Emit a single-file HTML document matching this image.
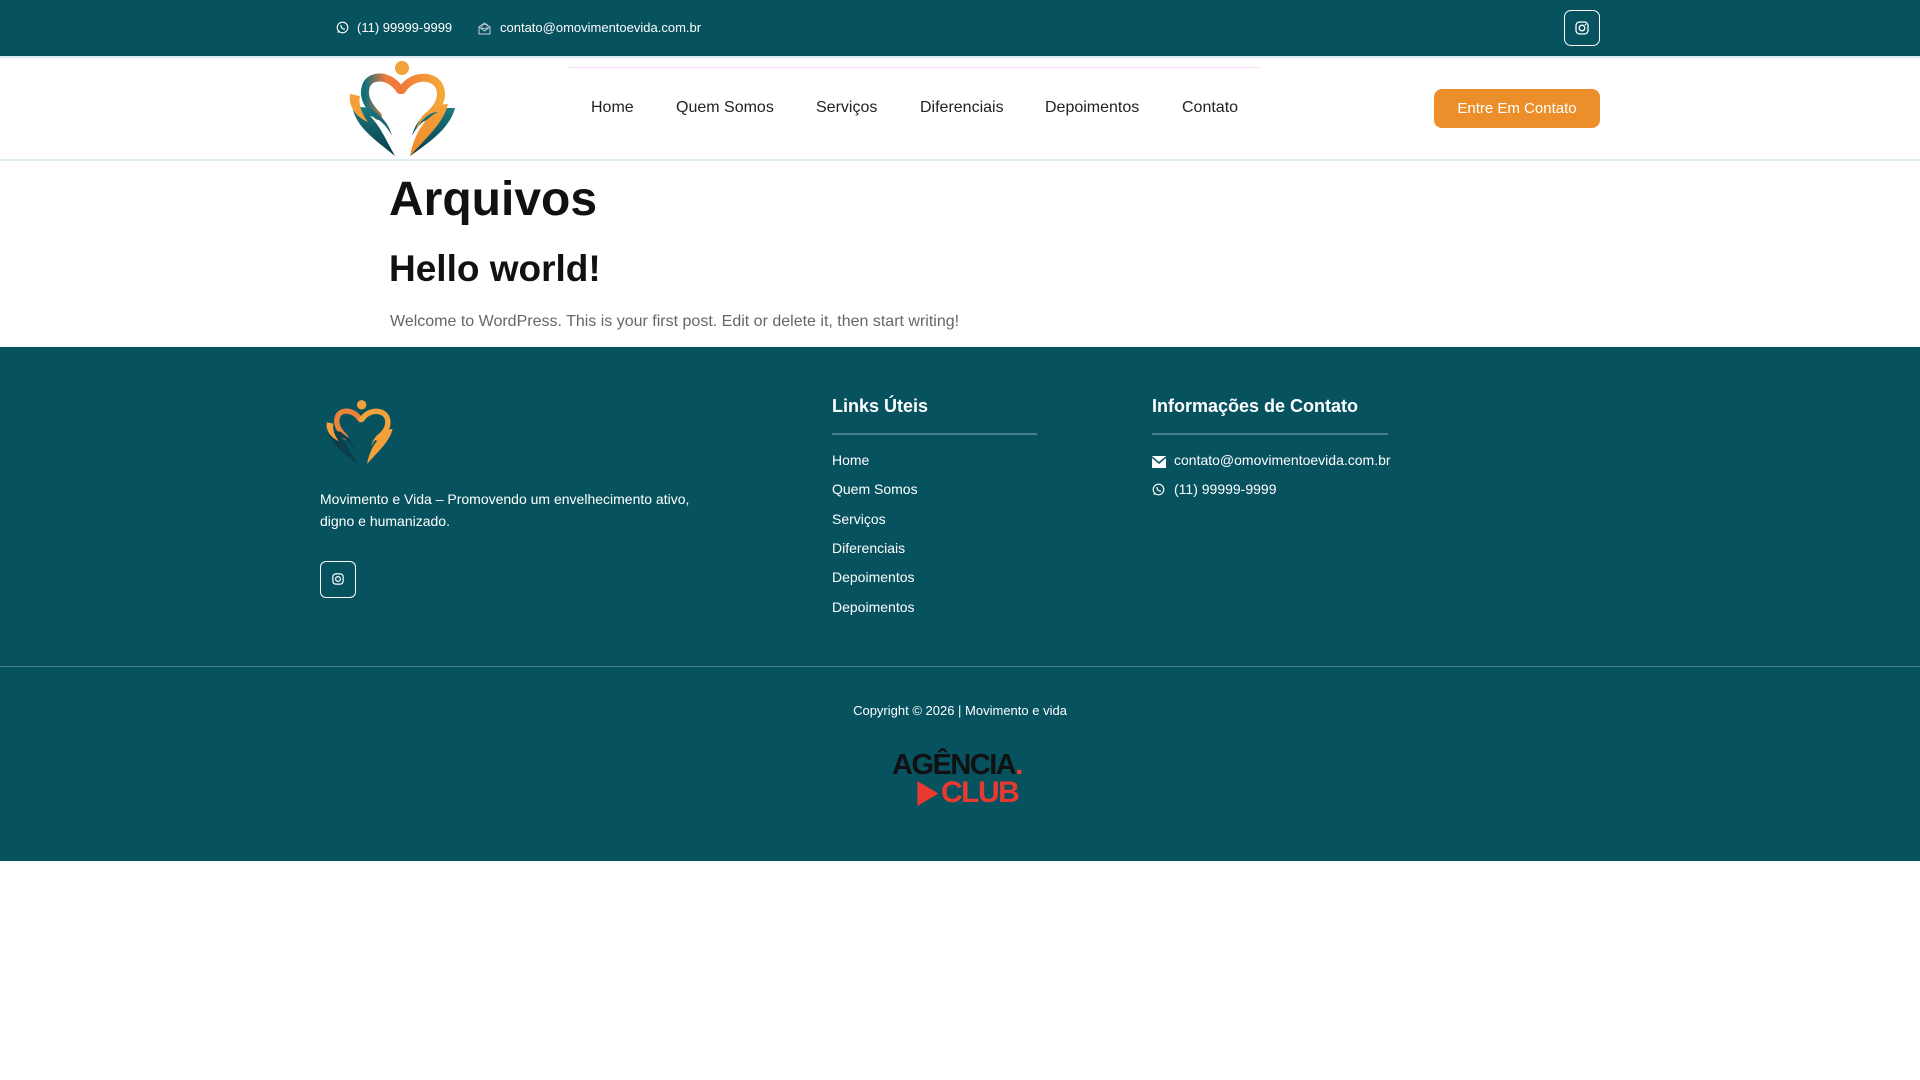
<!DOCTYPE html>
<html><head><meta charset="utf-8"><style>
*{margin:0;padding:0;box-sizing:border-box}
body{width:1920px;height:1080px;background:#fff;font-family:"Liberation Sans",Arial,sans-serif;position:relative;overflow:hidden}
.a{position:absolute;white-space:nowrap}
.top{position:absolute;left:0;top:0;width:1920px;height:56px;background:#07525f}
.hdr{position:absolute;left:0;top:56px;width:1920px;height:105px;border-top:2px solid #dcecf2;border-bottom:2px solid #dcecf2}
.nav{font-size:16px;color:#222;top:99px}
.ft{position:absolute;left:0;top:347px;width:1920px;height:514px;background:#07525f}
.fl{color:#fff;font-size:14px}
</style></head><body>
<div class="top"></div>
<svg class="a" style="left:336px;top:21px" width="13" height="13" viewBox="0 0 16 16"><circle cx="8" cy="8" r="6.5" fill="none" stroke="#fff" stroke-width="1.4"/><path d="M2.5 14.5l1-3" stroke="#fff" stroke-width="1.4"/><path d="M6 5c0 3 2 5 5 5" stroke="#fff" stroke-width="1.6" fill="none"/></svg>
<div class="a" style="left:357px;top:20px;color:#fff;font-size:13px">(11) 99999-9999</div>
<svg class="a" style="left:478px;top:21px" width="13" height="14" viewBox="0 0 13 14"><path d="M1 6l5.5-4 5.5 4v7H1z" fill="none" stroke="#ccd" stroke-width="1"/><path d="M1 6l5.5 4 5.5-4" fill="none" stroke="#ccd"/><rect x="4" y="3.5" width="5" height="4" fill="none" stroke="#ccd" stroke-width=".8"/></svg>
<div class="a" style="left:500px;top:20px;color:#fff;font-size:13px">contato@omovimentoevida.com.br</div>
<div class="a" style="left:1564px;top:10px;width:36px;height:36px;border:1px solid #fff;border-radius:7px"></div>
<svg class="a" style="left:1575px;top:21px" width="14" height="14" viewBox="0 0 14 14"><rect x="1" y="1" width="12" height="12" rx="3.5" fill="none" stroke="#fff" stroke-width="1.3"/><circle cx="7" cy="7" r="2.8" fill="none" stroke="#fff" stroke-width="1.3"/><circle cx="10.5" cy="3.5" r=".8" fill="#fff"/></svg>

<div class="hdr"></div>
<div class="a" style="left:567px;top:67px;width:692px;height:1px;background:#f8d8f8"></div>
<svg class="a" style="left:340px;top:56px" width="125" height="105" viewBox="0 0 125 105">
<defs><linearGradient id="g1" x1="0" x2="1"><stop offset="0" stop-color="#10707a"/><stop offset=".6" stop-color="#f07a3a"/></linearGradient><linearGradient id="g2" x1="0" x2="1"><stop offset="0" stop-color="#f07a3a"/><stop offset="1" stop-color="#f5a838"/></linearGradient><linearGradient id="h1" x1="0" y1="0" x2="0" y2="1"><stop offset="0" stop-color="#1a7b80"/><stop offset="1" stop-color="#083a4a"/></linearGradient><linearGradient id="h2" x1="0" y1="0" x2="0" y2="1"><stop offset="0" stop-color="#f4a13a"/><stop offset="1" stop-color="#f08a2a"/></linearGradient></defs>
<circle cx="62" cy="12" r="7" fill="#f3a23b"/>
<path d="M60 34C50 18 30 18 26 30C22 42 30 52 38 60" fill="none" stroke="url(#g1)" stroke-width="8" stroke-linecap="round"/>
<path d="M62 34C72 18 95 18 100 32C104 44 96 54 86 62" fill="none" stroke="url(#g2)" stroke-width="8" stroke-linecap="round"/>
<path d="M12 50C16 70 30 80 55 100C45 82 40 70 30 60C40 62 48 72 52 80C48 64 36 56 30 52Z" fill="url(#h1)"/>
<path d="M10 38C8 52 18 62 28 66C22 58 18 48 20 40Z" fill="#f4a03a"/>
<path d="M115 52C110 70 96 82 70 100C78 82 84 70 92 62C82 64 76 72 72 80C76 62 90 54 100 52Z" fill="url(#h1)"/>
<path d="M108 48C104 66 88 80 70 100C74 80 82 64 98 56C88 56 80 66 76 74C80 56 96 48 108 48Z" fill="url(#h2)"/>
</svg>
<div class="a nav" style="left:591px">Home</div>
<div class="a nav" style="left:676px">Quem Somos</div>
<div class="a nav" style="left:816px">Serviços</div>
<div class="a nav" style="left:920px">Diferenciais</div>
<div class="a nav" style="left:1045px">Depoimentos</div>
<div class="a nav" style="left:1182px">Contato</div>
<div class="a" style="left:1434px;top:89px;width:166px;height:39px;background:#ec8e2a;border-radius:8px;color:#fff;font-size:15px;line-height:39px;text-align:center">Entre Em Contato</div>

<div class="a" style="left:389px;top:172px;font-size:48px;font-weight:bold;color:#111">Arquivos</div>
<div class="a" style="left:389px;top:248px;font-size:37px;font-weight:bold;color:#111">Hello world!</div>
<div class="a" style="left:390px;top:313px;font-size:16px;color:#666">Welcome to WordPress. This is your first post. Edit or delete it, then start writing!</div>

<div class="ft"></div>
<svg class="a" style="left:320px;top:394px" width="84" height="76" viewBox="0 0 125 105">
<circle cx="62" cy="12" r="7" fill="#f3a23b"/>
<path d="M60 34C50 18 30 18 26 30C22 42 30 52 38 60" fill="none" stroke="#e8843a" stroke-width="8" stroke-linecap="round"/>
<path d="M62 34C72 18 95 18 100 32C104 44 96 54 86 62" fill="none" stroke="#f3a23b" stroke-width="8" stroke-linecap="round"/>
<path d="M12 50C16 70 30 80 55 100C45 82 40 70 30 60C40 62 48 72 52 80C48 64 36 56 30 52Z" fill="#0c3f4c"/>
<path d="M10 38C8 52 18 62 28 66C22 58 18 48 20 40Z" fill="#f4a03a"/>
<path d="M108 48C104 66 88 80 70 100C74 80 82 64 98 56C88 56 80 66 76 74C80 56 96 48 108 48Z" fill="#f4a03a"/>
</svg>
<div class="a fl" style="left:320px;top:488px;line-height:22px;white-space:normal;width:385px">Movimento e Vida – Promovendo um envelhecimento ativo, digno e humanizado.</div>
<div class="a" style="left:320px;top:561px;width:36px;height:37px;border:1px solid #fff;border-radius:6px"></div>
<svg class="a" style="left:332px;top:573px" width="12" height="12" viewBox="0 0 14 14"><rect x="1" y="1" width="12" height="12" rx="3.5" fill="none" stroke="#fff" stroke-width="1.4"/><circle cx="7" cy="7" r="2.8" fill="none" stroke="#fff" stroke-width="1.4"/></svg>

<div class="a" style="left:832px;top:396px;color:#fff;font-size:18px;font-weight:bold">Links Úteis</div>
<div class="a" style="left:832px;top:433px;width:205px;height:2px;background:#4d7c8a"></div>
<div class="a fl" style="left:832px;top:452px">Home</div>
<div class="a fl" style="left:832px;top:481px">Quem Somos</div>
<div class="a fl" style="left:832px;top:511px">Serviços</div>
<div class="a fl" style="left:832px;top:540px">Diferenciais</div>
<div class="a fl" style="left:832px;top:569px">Depoimentos</div>
<div class="a fl" style="left:832px;top:599px">Depoimentos</div>

<div class="a" style="left:1152px;top:396px;color:#fff;font-size:18px;font-weight:bold">Informações de Contato</div>
<div class="a" style="left:1152px;top:433px;width:236px;height:2px;background:#4d7c8a"></div>
<svg class="a" style="left:1152px;top:456px" width="14" height="12" viewBox="0 0 14 12"><rect width="14" height="12" fill="#fff"/><path d="M0 1l7 6 7-6" fill="none" stroke="#07525f" stroke-width="1.5"/></svg>
<div class="a fl" style="left:1174px;top:452px">contato@omovimentoevida.com.br</div>
<svg class="a" style="left:1152px;top:483px" width="13" height="13" viewBox="0 0 16 16"><circle cx="8" cy="8" r="6.5" fill="none" stroke="#fff" stroke-width="1.4"/><path d="M2.5 14.5l1-3" stroke="#fff" stroke-width="1.4"/><path d="M6 5c0 3 2 5 5 5" stroke="#fff" stroke-width="1.6" fill="none"/></svg>
<div class="a fl" style="left:1174px;top:481px">(11) 99999-9999</div>

<div class="a" style="left:0;top:666px;width:1920px;height:1px;background:#4d7c8a"></div>
<div class="a" style="left:0;top:703px;width:1920px;text-align:center;color:#fff;font-size:13px">Copyright © 2026 | Movimento e vida</div>
<div class="a" style="left:892px;top:750px;font-size:29px;font-weight:900;color:#111;letter-spacing:-1.5px;line-height:30px">AGÊNCIA<span style="color:#e83a30">.</span></div>
<svg class="a" style="left:917px;top:781px" width="22" height="25" viewBox="0 0 22 26"><path d="M0 0L22 13L0 26Z" fill="#e83a30"/></svg>
<div class="a" style="left:941px;top:777px;font-size:30px;font-weight:900;color:#e83a30;letter-spacing:-1.5px;line-height:32px">CLUB</div>
</body></html>
